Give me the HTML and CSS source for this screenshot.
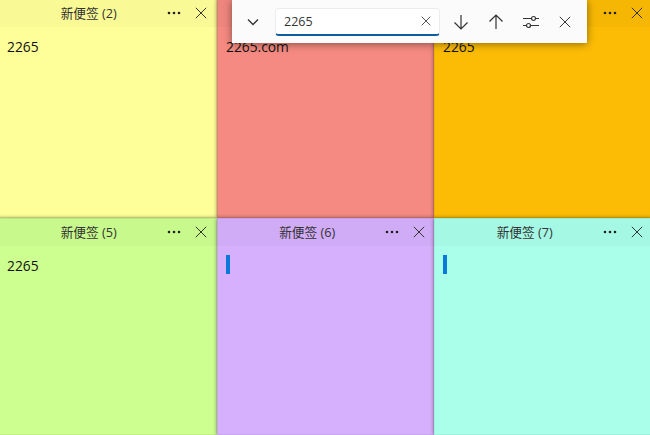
FILE: index.html
```html
<!DOCTYPE html>
<html lang="zh-CN">
<head>
  <meta charset="UTF-8" />
  <title>便签</title>
  <link rel="stylesheet" href="styles.css">
</head>
<body>

  <svg class="defs" width="0" height="0">
    <symbol id="close" viewBox="0 0 12 12"><path d="M.8.8l10.4 10.4M11.2.8L.8 11.2" fill="none" stroke="currentColor" stroke-width="1"/></symbol>
    <symbol id="dots" viewBox="0 0 14 4"><circle cx="2" cy="2" r="1.3"/><circle cx="7" cy="2" r="1.3"/><circle cx="12" cy="2" r="1.3"/></symbol>
  </svg>

  <div class="board">
    <div class="note yellow">
      <div class="note-head">
        <span class="note-title">新便签 (2)</span>
        <span class="note-btn"><svg class="ic-dots"><use href="#dots"/></svg></span>
        <span class="note-btn"><svg class="ic-close"><use href="#close"/></svg></span>
      </div>
      <div class="note-body">2265</div>
    </div>
    <div class="note red">
      <div class="note-head"></div>
      <div class="note-body">2265.com</div>
    </div>
    <div class="note orange">
      <div class="note-head">
        <span class="note-title"></span>
        <span class="note-btn"><svg class="ic-dots"><use href="#dots"/></svg></span>
        <span class="note-btn"><svg class="ic-close"><use href="#close"/></svg></span>
      </div>
      <div class="note-body">2265</div>
    </div>
    <div class="note green">
      <div class="note-head">
        <span class="note-title">新便签 (5)</span>
        <span class="note-btn"><svg class="ic-dots"><use href="#dots"/></svg></span>
        <span class="note-btn"><svg class="ic-close"><use href="#close"/></svg></span>
      </div>
      <div class="note-body">2265</div>
    </div>
    <div class="note purple">
      <div class="note-head">
        <span class="note-title">新便签 (6)</span>
        <span class="note-btn"><svg class="ic-dots"><use href="#dots"/></svg></span>
        <span class="note-btn"><svg class="ic-close"><use href="#close"/></svg></span>
      </div>
      <div class="note-body"><div class="caret"></div></div>
    </div>
    <div class="note teal">
      <div class="note-head">
        <span class="note-title">新便签 (7)</span>
        <span class="note-btn"><svg class="ic-dots"><use href="#dots"/></svg></span>
        <span class="note-btn"><svg class="ic-close"><use href="#close"/></svg></span>
      </div>
      <div class="note-body"><div class="caret"></div></div>
    </div>
  </div>

  <!-- find bar floats over the notes -->
  <div class="findbar">
    <span class="find-btn chevron">
      <svg width="12" height="8" viewBox="0 0 12 8"><path d="M1 1.500l5 5 5-5" fill="none" stroke="currentColor" stroke-width="1.3"/></svg>
    </span>
    <div class="find-input">
      <span class="find-text">2265</span>
      <svg class="ic-clear"><use href="#close"/></svg>
    </div>
    <span class="find-btn">
      <svg width="16" height="16" viewBox="0 0 16 16"><path d="M8 1v14M1.500 8.500L8 15l6.500-6.500" fill="none" stroke="currentColor" stroke-width="1.2"/></svg>
    </span>
    <span class="find-btn">
      <svg width="16" height="16" viewBox="0 0 16 16"><path d="M8 15V1M1.500 7.500L8 1l6.500 6.500" fill="none" stroke="currentColor" stroke-width="1.2"/></svg>
    </span>
    <span class="find-btn">
      <svg width="16" height="14" viewBox="0 0 16 14"><path d="M0 3.500h8.500M12.500 3.500H16M0 10.500h3.500M7.500 10.500H16" fill="none" stroke="currentColor" stroke-width="1.2"/><circle cx="10.500" cy="3.500" r="2" fill="none" stroke="currentColor" stroke-width="1.2"/><circle cx="5.500" cy="10.500" r="2" fill="none" stroke="currentColor" stroke-width="1.2"/></svg>
    </span>
    <span class="find-btn find-last">
      <svg class="ic-close"><use href="#close"/></svg>
    </span>
  </div>

</body>
</html>
```
FILE: styles.css
```css
html, body {
  margin: 0;
  padding: 0;
  width: 650px;
  height: 435px;
  overflow: hidden;
  font-family: "Open Sans", "Noto Sans CJK SC", sans-serif;
  color: #222;
}
.defs {
  position: absolute;
}
/* windows overlap the screen edge a little, so the grid starts off-page */
.board {
  display: grid;
  grid-template-columns: 219px 217px 218px;
  grid-template-rows: 219px 217px;
  margin: -1px 0 0 -2px;
  width: 654px;
  height: 436px;
}
.note {
  display: flex;
  flex-direction: column;
  position: relative;
  box-shadow: inset 0 0 0 1px rgba(0,0,0,0.06), 0 0 4px rgba(0,0,0,0.45);
}
.yellow { background: #ffff99; }
.red { background: #f48a81; }
.orange { background: #fcbc05; }
.green { background: #ccff90; }
.purple { background: #d6b0fc; }
.teal { background: #a9ffea; }

.note-head {
  display: flex;
  align-items: center;
  height: 28px;
  flex: none;
  padding-right: 1.5px;
  background: rgba(0,0,0,0.025);
}
.note:nth-child(3n+1) .note-head {
  padding-right: 2.5px;
}
.note-title {
  flex: 1;
  padding: 0 0 2px 19px;
  text-align: center;
  font-size: 12.7px;
  color: #333;
}
.note-btn {
  display: flex;
  align-items: center;
  justify-content: center;
  width: 27px;
  height: 28px;
  color: #333;
  fill: #222;
}
.ic-dots {
  width: 14px;
  height: 4px;
}
.ic-close {
  width: 12px;
  height: 12px;
}
.note-body {
  padding: 10px 9px;
  font-size: 13.8px;
  line-height: 20px;
  color: #111;
}
.caret {
  width: 4px;
  height: 19px;
  margin-top: -1px;
  background: #0b78dc;
}

.findbar {
  position: absolute;
  top: 0;
  left: 232px;
  width: 355px;
  height: 43px;
  display: flex;
  align-items: center;
  box-sizing: border-box;
  padding: 0 5px 0 3px;
  background: #fbfbfb;
  box-shadow: 0 1px 8px rgba(0,0,0,0.45);
  color: #333;
}
.find-btn {
  display: flex;
  align-items: center;
  justify-content: center;
  width: 35px;
  height: 32px;
  flex: none;
}
.chevron {
  margin-right: 5px;
}
.find-last {
  margin-left: -1px;
}
.find-input {
  display: flex;
  align-items: center;
  justify-content: space-between;
  width: 165px;
  height: 28px;
  margin-right: 3px;
  padding: 0 8px;
  box-sizing: border-box;
  flex: none;
  background: #fff;
  border: 1px solid #ececec;
  border-bottom: 2px solid #0f5c9f;
  border-radius: 4px;
  font-size: 12.5px;
}
.ic-clear {
  width: 10px;
  height: 10px;
}
```
